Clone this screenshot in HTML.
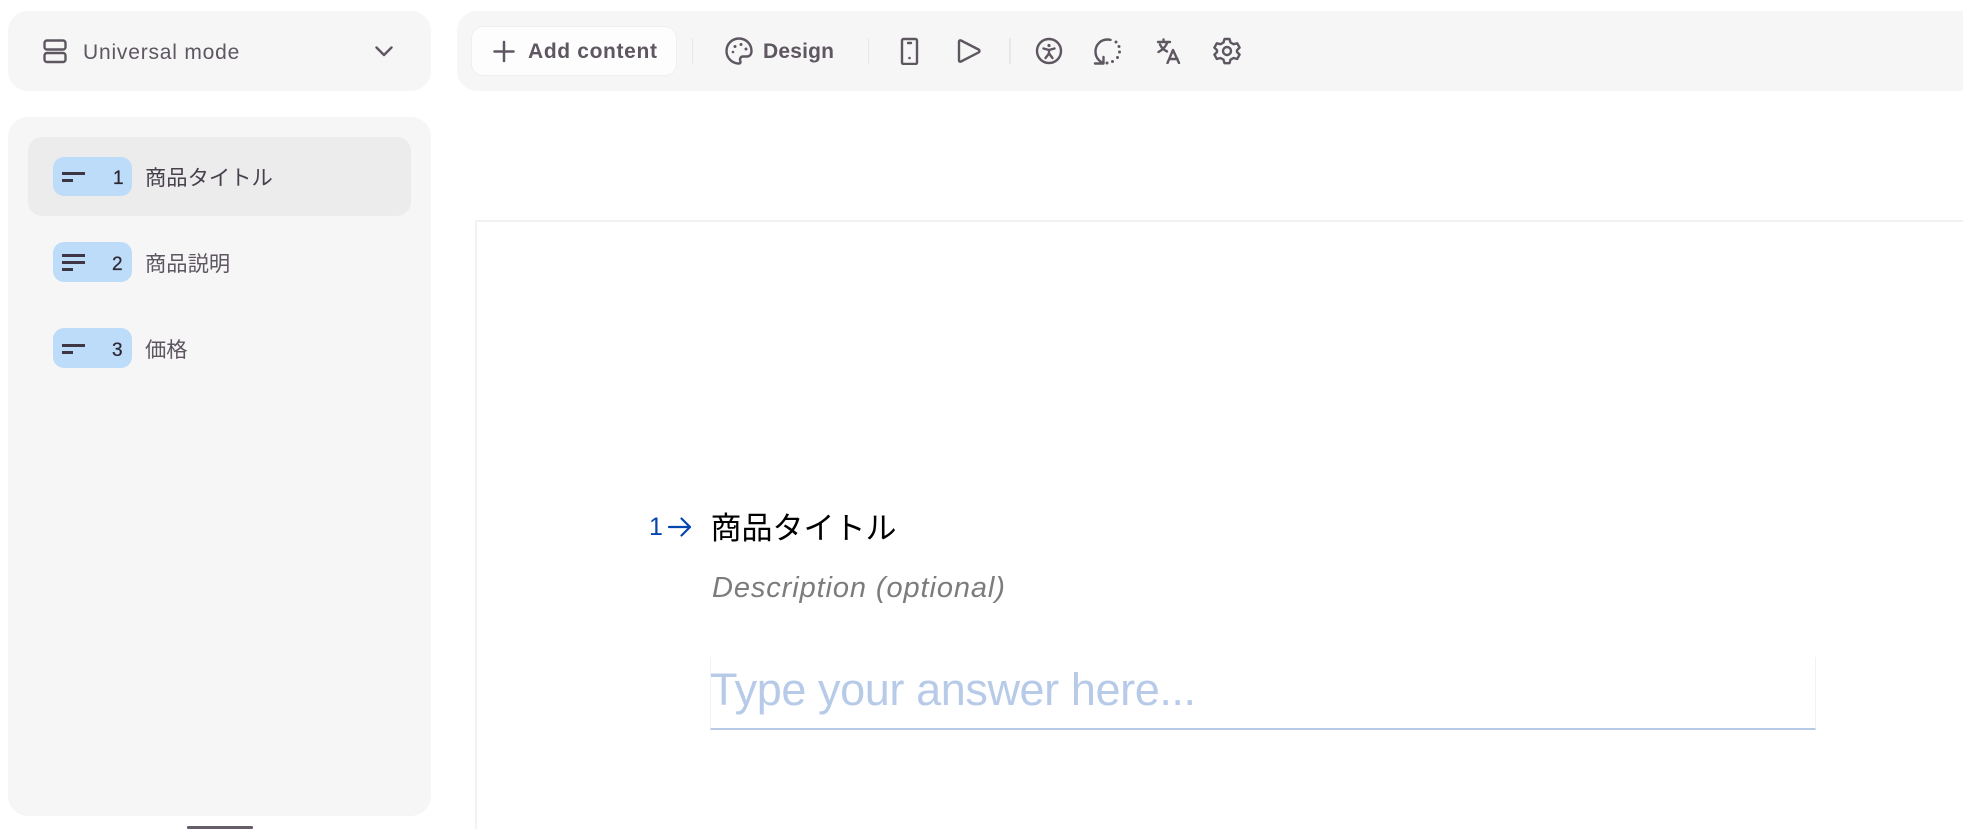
<!DOCTYPE html>
<html><head><meta charset="utf-8"><style>
*{box-sizing:border-box}
html,body{margin:0;padding:0;width:1963px;height:829px;overflow:hidden;background:#fff}
body{position:relative;font-family:"Liberation Sans","Noto Sans CJK JP",sans-serif}
.a{position:absolute}
.t{position:absolute;white-space:nowrap;line-height:1}
svg{position:absolute;fill:none;stroke:#5e5660;stroke-width:2.4;stroke-linecap:round;stroke-linejoin:round}
.badge{position:absolute;left:53px;width:79px;background:#bddcf9;border-radius:11px}
.num{position:absolute;left:112px;font-size:19px;color:#2e2733;line-height:1;white-space:nowrap;-webkit-text-stroke:.25px #2e2733}
.lab{position:absolute;left:145px;font-size:21.3px;color:#5e5660;line-height:1;white-space:nowrap}
.sep{position:absolute;width:1px;top:38px;height:26px;background:#e8e8e8}
.bar{position:absolute;height:2.5px;background:#3e3644;left:62px}
</style></head><body>
<div class="a" style="left:8px;top:11px;width:423px;height:80px;background:#f6f6f6;border-radius:20px"></div>
<svg style="left:41px;top:38px" width="26" height="26" viewBox="0 0 26 26"><rect x="3.500" y="2.500" width="21" height="9" rx="2.500"/><rect x="3.500" y="15" width="21" height="9" rx="2.500"/></svg>
<div class="t" style="left:83px;top:42px;font-size:21px;letter-spacing:.8px;color:#5e5660">Universal mode</div>
<svg style="left:373px;top:40px" width="22" height="22" viewBox="0 0 22 22"><path d="M3.500 7.500 11 15 18.500 7.500"/></svg>

<div class="a" style="left:8px;top:117px;width:423px;height:699px;background:#f6f6f6;border-radius:20px"></div>
<div class="a" style="left:28px;top:137px;width:383px;height:79px;background:#ececec;border-radius:14px"></div>
<div class="badge" style="top:157px;height:39px"></div>
<div class="bar" style="top:172px;width:23px"></div><div class="bar" style="top:179px;width:11px"></div>
<div class="num" style="top:169px;left:113px">1</div>
<div class="lab" style="top:167.500px;color:#48414c">商品タイトル</div>
<div class="badge" style="top:242px;height:40px"></div>
<div class="bar" style="top:254px;width:23px"></div><div class="bar" style="top:261px;width:23px"></div><div class="bar" style="top:268px;width:11px"></div>
<div class="num" style="top:255px">2</div>
<div class="lab" style="top:253.500px">商品説明</div>
<div class="badge" style="top:328px;height:40px"></div>
<div class="bar" style="top:344px;width:23px"></div><div class="bar" style="top:351px;width:11px"></div>
<div class="num" style="top:341px">3</div>
<div class="lab" style="top:339.500px">価格</div>
<div class="a" style="left:187px;top:826px;width:66px;height:3px;background:#665f69;border-radius:1px"></div>

<div class="a" style="left:457px;top:11px;width:1506px;height:80px;background:#f6f6f6;border-radius:20px 0 0 20px"></div>
<div class="a" style="left:471px;top:26px;width:206px;height:50px;background:#fdfdfd;border:1px solid #efefef;border-radius:12px"></div>
<svg style="left:491px;top:38px" width="26" height="26" viewBox="0 0 26 26"><path d="M13 4V23M3.500 13.500H22.500" stroke-width="2.500"/></svg>
<div class="t" style="left:528px;top:41px;font-size:21px;font-weight:700;letter-spacing:.65px;color:#5e5660">Add content</div>
<div class="sep" style="left:692px"></div>
<svg style="left:724px;top:36px" width="30" height="30" viewBox="0 0 30 30"><path d="M15 2.500C8 2.500 2.500 8 2.500 15S8 27.500 15 27.500C16.500 27.500 16.800 26 16.300 24.800 15.500 22.800 16.500 20.500 19 20.500H23C25.500 20.500 27.500 18.500 27.500 15 27.500 8 22 2.500 15 2.500Z"/><circle cx="9" cy="16" r="1.300" fill="#5e5660" stroke="none"/><circle cx="11" cy="10.500" r="1.500" fill="#5e5660" stroke="none"/><circle cx="17" cy="8.500" r="1.500" fill="#5e5660" stroke="none"/><circle cx="22" cy="13" r="1.500" fill="#5e5660" stroke="none"/></svg>
<div class="t" style="left:763px;top:41px;font-size:21px;font-weight:700;letter-spacing:.2px;color:#5e5660">Design</div>
<div class="sep" style="left:868px"></div>
<svg style="left:899px;top:37px" width="22" height="28" viewBox="0 0 22 28"><rect x="3" y="2" width="15" height="25" rx="1.500"/><path d="M9 6H12"/><circle cx="10.500" cy="21" r="1.300" fill="#5e5660" stroke="none"/></svg>
<svg style="left:955px;top:38px" width="26" height="26" viewBox="0 0 26 26"><path d="M4 3.500C4 2.500 5 2 6 2.500L23.500 11.500C24.800 12.200 24.800 13.800 23.500 14.500L6 23.500C5 24 4 23.500 4 22.500Z"/></svg>
<div class="sep" style="left:1009px;width:2px"></div>
<svg style="left:1035px;top:37px" width="28" height="28" viewBox="0 0 28 28"><circle cx="14" cy="14" r="12"/><circle cx="14" cy="8.500" r="1.600" fill="#5e5660" stroke="none"/><path d="M8.500 11.500 14 13 19.500 11.500M14 13V16.500M14 16.500 10.500 21M14 16.500 17.500 21"/></svg>
<svg style="left:1093px;top:37px" width="30" height="28" viewBox="0 0 30 28"><path d="M10 26C5 23.500 2.500 19.500 2.500 14.500 2.500 8 7.500 2.500 14.500 2.500 15.500 2.500 16.500 2.600 17.500 2.900"/><path d="M2 26.500H10.500V20"/><path d="M23 5 23 5M26 9.500 26 9.500M26.500 15 26.500 15M24.500 20.500 24.500 20.500M19.500 24.500 19.500 24.500M14 26 14 26" stroke-width="3"/></svg>
<svg style="left:1156px;top:38px" width="26" height="26" viewBox="0 0 26 26"><path d="M2 4H14M7.500 1.500V4M11.500 4C10 8.500 7 11.500 2.500 14M4 6.500C5.500 9.800 8 12 11 13.500"/><path d="M11.500 25 17 12 23 25M13.500 21H21.500"/></svg>
<svg style="left:1213px;top:37px" width="28" height="28" viewBox="0 0 28 28"><path d="M11.500 2H16.500L17.500 5.500 20.500 7.200 24.200 6.300 26.600 10.600 24 13.200V15L26.600 17.600 24.200 21.900 20.500 21 17.500 22.700 16.500 26.200H11.500L10.500 22.700 7.500 21 3.800 21.900 1.400 17.600 4 15V13.200L1.400 10.600 3.800 6.300 7.500 7.200 10.500 5.500Z"/><circle cx="14" cy="14" r="4"/></svg>

<div class="a" style="left:475px;top:220px;width:1488px;height:609px;border-top:2px solid #f2f2f2;border-left:2px solid #f2f2f2"></div>
<div class="t" style="left:649px;top:515px;font-size:25px;color:#0445af">1</div>
<svg style="left:667px;top:514.500px;stroke:#0445af" width="24" height="24" viewBox="0 0 24 24"><path d="M2 12H23M14.500 3.500 23 12 14.500 20.500" stroke-width="2.200"/></svg>
<div class="t" style="left:710.500px;top:513px;font-size:31px;color:#000">商品タイトル</div>
<div class="t" style="left:712px;top:574px;font-size:29px;letter-spacing:.9px;font-style:italic;color:#7c7c7c">Description (optional)</div>
<div class="a" style="left:710px;top:657px;width:1106px;height:73px;border-left:1px solid #eef2fa;border-right:1px solid #eef2fa;border-bottom:2px solid #b7cbe9"></div>
<div class="t" style="left:710px;top:667px;font-size:45px;letter-spacing:-.4px;color:#b7cbe9">Type your answer here...</div>
</body></html>
